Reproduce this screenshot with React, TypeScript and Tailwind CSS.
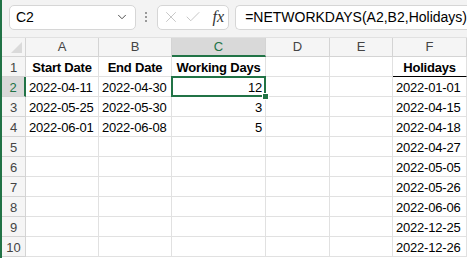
import { ChevronDown, X, Check } from "lucide-react";

const font = { fontFamily: '"Liberation Sans", Arial, sans-serif' };

const cols = ["A", "B", "C", "D", "E", "F"];

const dataRows: string[][] = [
  ["Start Date", "End Date", "Working Days", "", "", "Holidays"],
  ["2022-04-11", "2022-04-30", "12", "", "", "2022-01-01"],
  ["2022-05-25", "2022-05-30", "3", "", "", "2022-04-15"],
  ["2022-06-01", "2022-06-08", "5", "", "", "2022-04-18"],
  ["", "", "", "", "", "2022-04-27"],
  ["", "", "", "", "", "2022-05-05"],
  ["", "", "", "", "", "2022-05-26"],
  ["", "", "", "", "", "2022-06-06"],
  ["", "", "", "", "", "2022-12-25"],
  ["", "", "", "", "", "2022-12-26"],
];

function Cell({ value, r, c }: { value: string; r: number; c: number }) {
  const header = r === 0;
  const selected = r === 1 && c === 2;
  const numeric = c === 2 && r > 0;
  const bold = header && value !== "";
  const underline = header && c === 5;
  return (
    <div
      className={`relative flex items-end h-[20px] px-[3px] pb-[2px] text-[13px] leading-none whitespace-nowrap tracking-[-0.2px] text-black border-r border-b border-[#e1e1e1] ${
        numeric ? "justify-end" : bold ? "justify-center" : "justify-start"
      } ${bold ? "font-bold" : ""} ${underline ? "border-b-black" : ""} ${selected ? "z-10" : ""}`}
    >
      {value}
      {selected && (
        <>
          <div className="absolute -left-[1px] -top-[1px] -right-[1px] -bottom-[1px] border-2 border-[#217346]" />
          <div className="absolute -right-[4px] -bottom-[4px] w-[7px] h-[7px] bg-[#217346] border border-white" />
        </>
      )}
    </div>
  );
}

export default function App() {
  return (
    <div className="w-[467px] h-[258px] overflow-hidden bg-white border-l-2 border-[#217346]" style={font}>
      {/* formula bar */}
      <div className="h-[38px] bg-[#f3f3f3] flex items-center pl-[7px] pb-[3px] border-b border-[#e1e1e1]">
        <div className="w-[128px] h-[25px] bg-white border border-[#d6d6d6] rounded-[5px] flex items-center justify-between pl-[6px] pr-[6px] text-[14px] text-black">
          <span>C2</span>
          <ChevronDown size={14} strokeWidth={1.6} className="text-[#444]" />
        </div>
        <div className="w-[21px] flex flex-col items-center gap-[2px]">
          <span className="w-[2px] h-[2px] bg-[#999]" />
          <span className="w-[2px] h-[2px] bg-[#999]" />
          <span className="w-[2px] h-[2px] bg-[#999]" />
        </div>
        <div className="w-[73px] h-[25px] bg-white border border-[#d6d6d6] rounded-[5px] flex items-center pl-[4px] pr-[4px] gap-[4px]">
          <X size={18} strokeWidth={1} className="text-[#b4b4b4]" />
          <Check size={18} strokeWidth={1} className="text-[#b4b4b4]" />
          <span
            className="ml-auto italic text-[16px] text-[#333] leading-none"
            style={{ fontFamily: '"Liberation Serif", serif' }}
          >
            fx
          </span>
        </div>
        <div className="ml-[6px] flex-1 h-[25px] bg-white border border-r-0 border-[#d6d6d6] rounded-l-[5px] flex items-center pl-[9px] text-[14px] text-black whitespace-nowrap">
          =NETWORKDAYS(A2,B2,Holidays)
        </div>
      </div>

      {/* sheet */}
      <div className="grid grid-cols-[24px_73px_73px_94px_64px_63px_1fr]">
        <div className="h-[19px] bg-[#f5f5f5] border-r border-b border-[#d4d4d4] relative">
          <div className="absolute right-[3px] bottom-[3px] w-0 h-0 border-l-[11px] border-l-transparent border-b-[11px] border-b-[#dadada]" />
        </div>
        {cols.map((c) => (
          <div
            key={c}
            className={`h-[19px] flex items-center justify-center text-[13px] border-r border-[#d4d4d4] ${
              c === "C"
                ? "bg-[#d9d9d9] text-[#217346] border-b-2 border-b-[#217346]"
                : "bg-[#f5f5f5] text-[#444] border-b border-b-[#d4d4d4]"
            }`}
          >
            {c}
          </div>
        ))}
        {dataRows.map((row, r) => (
          <div key={r} className="contents">
            <div
              className={`h-[20px] flex items-end justify-center pb-[2px] text-[13px] leading-none border-b border-[#d4d4d4] ${
                r === 1
                  ? "bg-[#d9d9d9] text-[#217346] border-r-2 border-r-[#217346]"
                  : "bg-[#f5f5f5] text-[#444] border-r border-r-[#d4d4d4]"
              }`}
            >
              {r + 1}
            </div>
            {row.map((v, c) => (
              <Cell key={c} value={v} r={r} c={c} />
            ))}
          </div>
        ))}
      </div>
    </div>
  );
}
